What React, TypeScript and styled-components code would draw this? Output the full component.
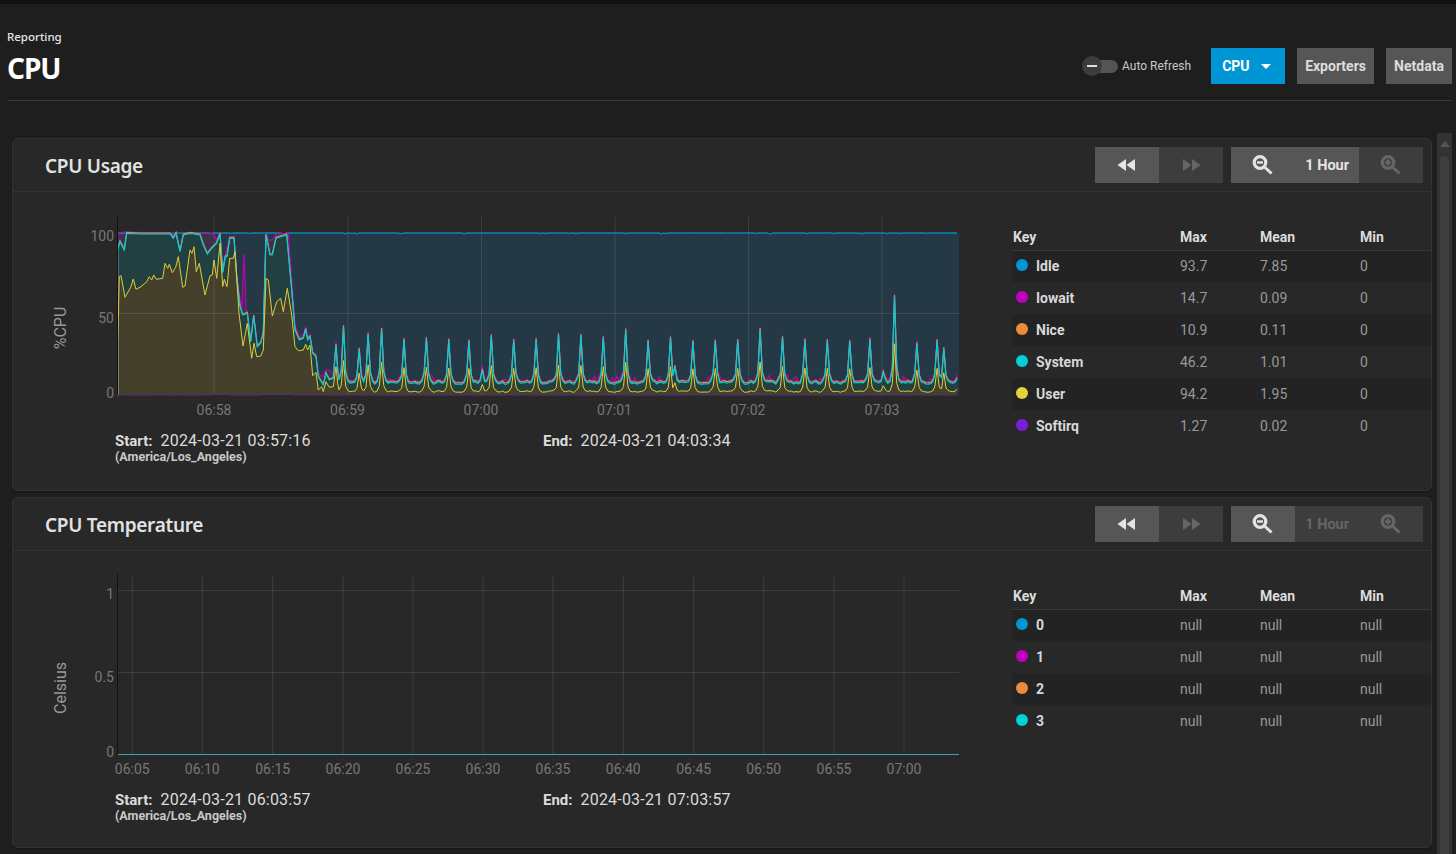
import React from "react";
import styled, { createGlobalStyle } from "styled-components";
import { MdFastRewind, MdFastForward } from "react-icons/md";

const GlobalStyle = createGlobalStyle`
  html, body {
    margin: 0;
    height: 100%;
    overflow: hidden;
    background: #1e1e1e;
    font-family: Roboto, "Liberation Sans", sans-serif;
  }
`;

const Page = styled.div`
  height: 854px;
  overflow: hidden;
  border-top: 4px solid #111;
  box-sizing: border-box;
`;

const PageHeader = styled.header`
  display: flex;
  align-items: flex-end;
  justify-content: space-between;
  height: 96px;
  margin: 0 4px 0 7px;
  border-bottom: 1px solid #383838;
  box-sizing: content-box;
`;

const Crumbs = styled.div`
  padding-bottom: 14px;
`;

const Crumb = styled.div`
  font: 500 11.5px/16px "Noto Sans", sans-serif;
  color: #e6e6e6;
  margin-bottom: 5px;
`;

const PageTitle = styled.h1`
  margin: 0;
  font: 700 28px/36px "Noto Sans", sans-serif;
  letter-spacing: -1px;
  color: #fff;
`;

const Actions = styled.div`
  display: flex;
  align-items: center;
  gap: 12px;
  padding-bottom: 16px;
`;

const RefreshToggle = styled.div`
  display: flex;
  align-items: center;
  gap: 4px;
  margin-right: 8px;
  font-size: 12px;
  color: #c8c8c8;
`;

const ToggleTrack = styled.div`
  position: relative;
  width: 34px;
  height: 13px;
  margin-left: 2px;
  border-radius: 7px;
  background: #545454;
`;

const ToggleThumb = styled.span`
  position: absolute;
  left: -2px;
  top: -4px;
  width: 20px;
  height: 20px;
  border-radius: 50%;
  background: #3c3c3c;

  &::after {
    content: "";
    position: absolute;
    left: 5px;
    top: 9px;
    width: 10px;
    height: 2px;
    background: #ddd;
  }
`;

const ActionButton = styled.button<{ $primary?: boolean }>`
  display: flex;
  align-items: center;
  justify-content: ${(p) => (p.$primary ? "flex-start" : "center")};
  gap: 11px;
  height: 36px;
  padding: ${(p) => (p.$primary ? "0 14px 0 11px" : "0 8px")};
  min-width: ${(p) => (p.$primary ? "74px" : "66px")};
  border: 0;
  background: ${(p) => (p.$primary ? "#0095d5" : "#565656")};
  color: ${(p) => (p.$primary ? "#fff" : "#ddd")};
  font: 700 14px Roboto, sans-serif;
`;

const Caret = styled.span`
  width: 0;
  height: 0;
  border-left: 5px solid transparent;
  border-right: 5px solid transparent;
  border-top: 5px solid #fff;
`;

const Content = styled.div`
  display: flex;
  margin-top: 32px;
  height: 730px;
  overflow: hidden;
`;

const Cards = styled.main`
  width: 1420px;
  margin: 5px 0 0 12px;
  display: flex;
  flex-direction: column;
  gap: 6px;
`;

const ScrollTrack = styled.div`
  position: relative;
  width: 15px;
  margin-left: 5px;
  background: #333;
`;

const ScrollArrow = styled.span`
  position: absolute;
  left: 3px;
  top: 8px;
  border-left: 5px solid transparent;
  border-right: 5px solid transparent;
  border-bottom: 6px solid #555;
`;

const ScrollThumb = styled.span`
  position: absolute;
  left: 3px;
  top: 23px;
  bottom: 0;
  width: 9px;
  border-radius: 5px 5px 0 0;
  background: #3f3f3f;
`;

const Card = styled.section<{ $height: number }>`
  flex: none;
  height: ${(p) => p.$height}px;
  box-sizing: border-box;
  background: #282828;
  border: 1px solid #333;
  border-radius: 6px;
  box-shadow: 0 1px 1px #151515;
`;

const CardHeader = styled.div`
  display: flex;
  align-items: center;
  justify-content: space-between;
  height: 52px;
  padding: 0 8px 0 32px;
  border-bottom: 1px solid #333;
`;

const CardTitle = styled.h2`
  margin: 2px 0 0;
  font: 600 19px/26px "Noto Sans", sans-serif;
  letter-spacing: -0.3px;
  color: #e2e2e2;
`;

const Controls = styled.div`
  display: flex;
  gap: 8px;
`;

const Group = styled.div`
  display: flex;
`;

const Cell = styled.div<{ $on?: boolean }>`
  display: flex;
  align-items: center;
  justify-content: center;
  width: 64px;
  height: 36px;
  background: ${(p) => (p.$on ? "#565656" : "#3d3d3d")};
  color: ${(p) => (p.$on ? "#e4e4e4" : "#666")};
  font: 700 14.5px Roboto, sans-serif;
  white-space: nowrap;
`;

const RangeLabel = styled(Cell)`
  justify-content: flex-end;
  padding-right: 10px;
  box-sizing: border-box;
`;

const CardBody = styled.div`
  display: grid;
  grid-template-columns: 999px 419px;
  align-items: start;
`;

const ChartSvg = styled.svg`
  display: block;
  width: 999px;
  height: 236px;
  font-family: Roboto, sans-serif;
`;

const RangeRow = styled.div`
  display: grid;
  grid-template-columns: 428px 1fr;
  padding: 4px 0 0 102px;
`;

const RangeItem = styled.div`
  font-size: 16px;
  line-height: 18px;
  color: #dcdcdc;
  letter-spacing: 0.2px;

  b {
    font-weight: 700;
    font-size: 15px;
    letter-spacing: 0;
    margin-right: 8px;
  }
`;

const Zone = styled.div`
  font-size: 12.5px;
  font-weight: 700;
  line-height: 14px;
  color: #c8c8c8;
`;

const LegendTable = styled.table`
  width: 419px;
  margin-top: 32px;
  border-collapse: collapse;
  table-layout: fixed;
  font-size: 14px;

  th {
    height: 26px;
    padding: 0;
    text-align: left;
    font-weight: 700;
    color: #dcdcdc;
    border-bottom: 1px solid #383838;
    box-sizing: border-box;
  }

  th:first-child {
    padding-left: 1px;
  }

  td {
    height: 32px;
    padding: 0 0 1px;
    box-sizing: border-box;
    color: #999;
  }

  tbody tr:nth-child(odd) {
    background: #232323;
  }
`;

const KeyCell = styled.span`
  display: flex;
  align-items: center;
  gap: 8px;
  padding-left: 4px;
  font-weight: 700;
  color: #d8d8d8;
`;

const Dot = styled.i<{ $color: string }>`
  width: 12px;
  height: 12px;
  margin-top: -2px;
  border-radius: 50%;
  background: ${(p) => p.$color};
`;

const FillerCard = styled.section`
  flex: none;
  height: 40px;
  background: #282828;
  border: 1px solid #333;
  border-radius: 6px;
`;

const Zoomer = ({ plus }: { plus?: boolean }) => (
  <svg width="22" height="20" viewBox="0 0 22 20" fill="none" stroke="currentColor">
    <circle cx="8" cy="7.5" r="5.8" strokeWidth="3.2" />
    <path d="M12.5 12l7 6.5" strokeWidth="3" />
    <path d={plus ? "M5 7.5h6M8 4.5v6" : "M5 7.5h6"} strokeWidth="2.4" />
  </svg>
);

type Pt = [number, number];

// points read off the reference at 3x, x from 40 and y from 210
const fromZoom = (pts: Pt[]): Pt[] => pts.map(([x, y]) => [40 + x / 3, 210 + y / 3]);

const userHead = fromZoom([
  [233, 556], [233, 400], [238, 200], [243, 197], [255, 262], [272, 232], [280, 207], [288, 238], [303, 230],
  [320, 215], [328, 200], [335, 210], [341, 195], [349, 208], [368, 205], [375, 160], [383, 175], [388, 163],
  [397, 188], [407, 172], [415, 140], [428, 232], [435, 228], [450, 120], [456, 130], [462, 110], [469, 185],
  [478, 160], [495, 255], [510, 197], [517, 195], [522, 150], [530, 205], [540, 100], [548, 230], [553, 208],
  [561, 230], [569, 145], [580, 145], [585, 125], [597, 310], [609, 408], [622, 340], [635, 445], [642, 400],
  [650, 440], [662, 438], [670, 420], [678, 205], [685, 210], [697, 318], [710, 275], [722, 265], [730, 305],
  [742, 235], [755, 315], [765, 410], [775, 422], [790, 420], [797, 403], [803, 420], [810, 405], [818, 497],
  [828, 487], [835, 540], [845, 530], [850, 545], [858, 515], [868, 532], [880, 530], [888, 470], [893, 520],
]);

const systemHead = fromZoom([
  [233, 556], [233, 120], [240, 95], [253, 120], [260, 70], [300, 72], [360, 72], [390, 72], [400, 85], [408, 70],
  [420, 125], [430, 75], [450, 70], [480, 75], [490, 105], [502, 132], [515, 115], [530, 100], [540, 72], [548, 188],
  [556, 140], [561, 140], [569, 85], [582, 85], [590, 200], [600, 290], [608, 315], [622, 310], [632, 395], [641, 318],
  [652, 410], [662, 400], [670, 370], [678, 75], [690, 135], [697, 135], [708, 85], [740, 75], [755, 240], [765, 360],
  [778, 390], [790, 385], [797, 358], [803, 390], [810, 380], [818, 430], [828, 440], [835, 500], [850, 525], [858, 490],
  [868, 510], [880, 505], [888, 405], [893, 480],
]);

const iowaitHead = fromZoom([
  [233, 556], [233, 68], [260, 66], [390, 70], [400, 75], [408, 68], [420, 118], [430, 70], [485, 70], [520, 70],
  [530, 90], [540, 68], [548, 180], [556, 135], [569, 80], [582, 80], [590, 195], [605, 300], [612, 132], [618, 300],
  [622, 305], [632, 390], [641, 315], [652, 405], [662, 395], [670, 365], [678, 70], [685, 90], [697, 90], [708, 72],
  [745, 70], [755, 210], [765, 345], [778, 380], [790, 375], [797, 350], [803, 385], [810, 375], [818, 425], [828, 435],
  [835, 490], [845, 500], [858, 480], [868, 480], [880, 495], [888, 395], [893, 470],
]);

// spike x in page px, peak y in zoom px
const spikes: Pt[] = [
  [343.3, 350], [358.3, 415], [367.7, 375], [380.7, 358], [403, 388], [425.3, 385], [447.7, 388], [470, 393],
  [481.3, 478], [492.3, 380], [514.7, 390], [536.7, 390], [559, 378], [581.7, 380], [604, 385], [626, 362],
  [648.3, 393], [670.7, 385], [674.7, 470], [692.7, 392], [715, 390], [737.7, 390], [760, 362], [782, 387],
  [804.3, 392], [826.7, 392], [849, 397], [871, 392], [884.3, 485], [893.7, 262], [916, 398], [938, 393],
  [944.7, 418], [959, 445],
];

let seed = 7;
const rnd = () => {
  seed = (seed * 16807) % 2147483647;
  return seed / 2147483647;
};

const STEP = 2.24;
const userTail: Pt[] = [];
const systemTail: Pt[] = [];
const iowaitTail: Pt[] = [];
const niceTail: Pt[] = [];

for (let x = 339; x <= 959; x += STEP) {
  const wobble = rnd() * 2.6 - 1.3;
  const bump = rnd() > 0.8 ? rnd() * 5 : 0;
  let rise = 0;
  spikes.forEach(([sx, zy]) => {
    const h = 383 - (210 + zy / 3);
    const d = Math.abs(x - sx) / STEP;
    if (d < 0.5) rise = Math.max(rise, h);
    else if (d < 1.5) rise = Math.max(rise, h * 0.18);
    else if (d < 2.5) rise = Math.max(rise, h * 0.03);
  });
  const sys = 383 + wobble - rise;
  systemTail.push([x, sys]);
  niceTail.push([x, sys - 1.4]);
  iowaitTail.push([x, sys - 2 - bump * (rise > 4 ? 0.5 : 1)]);
  userTail.push([x, 391.5 + wobble * 0.6 - rise * 0.55]);
}

const idleLine: Pt[] = [];
for (let x = 117; x <= 959; x += STEP) idleLine.push([x, 233 + (rnd() > 0.85 ? rnd() * 1.2 - 0.3 : 0)]);

const softLine: Pt[] = [];
for (let x = 117; x <= 959; x += STEP) {
  const lift = (x > 210 && x < 228) || (x > 262 && x < 292) ? 1 : rnd() > 0.9 ? 0.6 : 0;
  softLine.push([x, 395.4 - lift]);
}

const user = [...userHead, ...userTail];
const system = [...systemHead, ...systemTail];
const iowait = [...iowaitHead, ...iowaitTail];
const nice = [...systemHead.map(([x, y]): Pt => [x, y - 1]), ...niceTail];

const line = (pts: Pt[]) => "M" + pts.map(([x, y]) => `${x.toFixed(1)} ${y.toFixed(1)}`).join("L");
const area = (pts: Pt[]) => `${line(pts)}L${pts[pts.length - 1][0].toFixed(1)} 395L117 395Z`;

const AXIS = "#999";
const TICK = "#777";

const UsageChart = () => (
  <ChartSvg viewBox="13 192 999 236">
    <rect x="117" y="233" width="842" height="162" fill="#243945" />
    <path d={area(iowait)} fill="#40304a" />
    <path d={area(system)} fill="#22403f" />
    <path d={area(user)} fill="#44402c" />
    {[214, 348, 481.5, 615, 748.5, 882].map((x) => (
      <line key={x} x1={x} x2={x} y1="217" y2="395" stroke="#fff" strokeOpacity="0.1" />
    ))}
    <line x1="117" x2="959" y1="313.5" y2="313.5" stroke="#fff" strokeOpacity="0.1" />
    <path d={line(idleLine)} fill="none" stroke="#0a86b8" strokeWidth="1.3" />
    <path d={line(iowait)} fill="none" stroke="#c000c0" strokeWidth="1.1" />
    <path d={line(nice)} fill="none" stroke="#ed8b3c" strokeWidth="1.1" />
    <path d={line(system)} fill="none" stroke="#00cfd6" strokeWidth="1.2" />
    <path d={line(user)} fill="none" stroke="#dccf3c" strokeWidth="1" />
    <path d={line(softLine)} fill="none" stroke="#6f1fd0" strokeWidth="0.8" strokeOpacity="0.6" />
    <line x1="117.5" x2="117.5" y1="216" y2="395" stroke="#111" />
    <text x="114" y="241" textAnchor="end" fontSize="14" fill={TICK}>100</text>
    <text x="114" y="323" textAnchor="end" fontSize="14" fill={TICK}>50</text>
    <text x="114" y="398" textAnchor="end" fontSize="14" fill={TICK}>0</text>
    {[["06:58", 214], ["06:59", 347.5], ["07:00", 481], ["07:01", 614.5], ["07:02", 748], ["07:03", 882]].map(([t, x]) => (
      <text key={t} x={x} y="415" textAnchor="middle" fontSize="14" fill={TICK}>{t}</text>
    ))}
    <text transform="translate(66 328) rotate(-90)" textAnchor="middle" fontSize="16" fill={AXIS}>%CPU</text>
  </ChartSvg>
);

const tempTicks: [string, number][] = [
  ["06:05", 132.3], ["06:10", 202.3], ["06:15", 272.7], ["06:20", 343], ["06:25", 413], ["06:30", 483],
  ["06:35", 553], ["06:40", 623.3], ["06:45", 693.7], ["06:50", 763.7], ["06:55", 834], ["07:00", 904],
];

const TemperatureChart = () => (
  <ChartSvg viewBox="13 551 999 236">
    {tempTicks.map(([t, x]) => (
      <line key={t} x1={x} x2={x} y1="576" y2="755" stroke="#fff" strokeOpacity="0.1" />
    ))}
    <line x1="117" x2="959" y1="590.5" y2="590.5" stroke="#fff" strokeOpacity="0.1" />
    <line x1="117" x2="959" y1="672.5" y2="672.5" stroke="#fff" strokeOpacity="0.1" />
    <line x1="117" x2="959" y1="754.5" y2="754.5" stroke="#3f9fae" />
    <line x1="117.5" x2="117.5" y1="574" y2="755" stroke="#111" />
    <text x="114" y="599" textAnchor="end" fontSize="14" fill={TICK}>1</text>
    <text x="114" y="682" textAnchor="end" fontSize="14" fill={TICK}>0.5</text>
    <text x="114" y="757" textAnchor="end" fontSize="14" fill={TICK}>0</text>
    {tempTicks.map(([t, x]) => (
      <text key={t} x={x} y="774" textAnchor="middle" fontSize="14" fill={TICK}>{t}</text>
    ))}
    <text transform="translate(66 688) rotate(-90)" textAnchor="middle" fontSize="16" fill={AXIS}>Celsius</text>
  </ChartSvg>
);

type Row = { key: string; color: string; max: string; mean: string; min: string };

const usageRows: Row[] = [
  { key: "Idle", color: "#0095d5", max: "93.7", mean: "7.85", min: "0" },
  { key: "Iowait", color: "#c000c0", max: "14.7", mean: "0.09", min: "0" },
  { key: "Nice", color: "#ed8b3c", max: "10.9", mean: "0.11", min: "0" },
  { key: "System", color: "#00cfd6", max: "46.2", mean: "1.01", min: "0" },
  { key: "User", color: "#e0d33e", max: "94.2", mean: "1.95", min: "0" },
  { key: "Softirq", color: "#7a1fd8", max: "1.27", mean: "0.02", min: "0" },
];

const tempRows: Row[] = usageRows.slice(0, 4).map((r, i) => ({
  key: String(i),
  color: r.color,
  max: "null",
  mean: "null",
  min: "null",
}));

const Legend = ({ rows }: { rows: Row[] }) => (
  <LegendTable>
    <colgroup>
      <col width="168" />
      <col width="80" />
      <col width="100" />
      <col width="71" />
    </colgroup>
    <thead>
      <tr>
        <th>Key</th>
        <th>Max</th>
        <th>Mean</th>
        <th>Min</th>
      </tr>
    </thead>
    <tbody>
      {rows.map((r) => (
        <tr key={r.key}>
          <td>
            <KeyCell>
              <Dot $color={r.color} />
              {r.key}
            </KeyCell>
          </td>
          <td>{r.max}</td>
          <td>{r.mean}</td>
          <td>{r.min}</td>
        </tr>
      ))}
    </tbody>
  </LegendTable>
);

type ReportProps = {
  title: string;
  height: number;
  start: string;
  end: string;
  rangeOn: boolean;
  chart: React.ReactNode;
  rows: Row[];
};

const Report = ({ title, height, start, end, rangeOn, chart, rows }: ReportProps) => (
  <Card $height={height}>
    <CardHeader>
      <CardTitle>{title}</CardTitle>
      <Controls>
        <Group>
          <Cell $on><MdFastRewind size={24} /></Cell>
          <Cell><MdFastForward size={24} /></Cell>
        </Group>
        <Group>
          <Cell $on><Zoomer /></Cell>
          <RangeLabel $on={rangeOn}>1 Hour</RangeLabel>
          <Cell><Zoomer plus /></Cell>
        </Group>
      </Controls>
    </CardHeader>
    <CardBody>
      <div>
        {chart}
        <RangeRow>
          <div>
            <RangeItem><b>Start:</b>{start}</RangeItem>
            <Zone>(America/Los_Angeles)</Zone>
          </div>
          <RangeItem><b>End:</b>{end}</RangeItem>
        </RangeRow>
      </div>
      <Legend rows={rows} />
    </CardBody>
  </Card>
);

export default function App() {
  return (
    <Page>
      <GlobalStyle />
      <PageHeader>
        <Crumbs>
          <Crumb>Reporting</Crumb>
          <PageTitle>CPU</PageTitle>
        </Crumbs>
        <Actions>
          <RefreshToggle>
            <ToggleTrack><ToggleThumb /></ToggleTrack>
            Auto Refresh
          </RefreshToggle>
          <ActionButton $primary>CPU <Caret /></ActionButton>
          <ActionButton>Exporters</ActionButton>
          <ActionButton>Netdata</ActionButton>
        </Actions>
      </PageHeader>
      <Content>
        <Cards>
          <Report
            title="CPU Usage"
            height={353}
            start="2024-03-21 03:57:16"
            end="2024-03-21 04:03:34"
            rangeOn
            chart={<UsageChart />}
            rows={usageRows}
          />
          <Report
            title="CPU Temperature"
            height={351}
            start="2024-03-21 06:03:57"
            end="2024-03-21 07:03:57"
            rangeOn={false}
            chart={<TemperatureChart />}
            rows={tempRows}
          />
          <FillerCard />
        </Cards>
        <ScrollTrack>
          <ScrollArrow />
          <ScrollThumb />
        </ScrollTrack>
      </Content>
    </Page>
  );
}
